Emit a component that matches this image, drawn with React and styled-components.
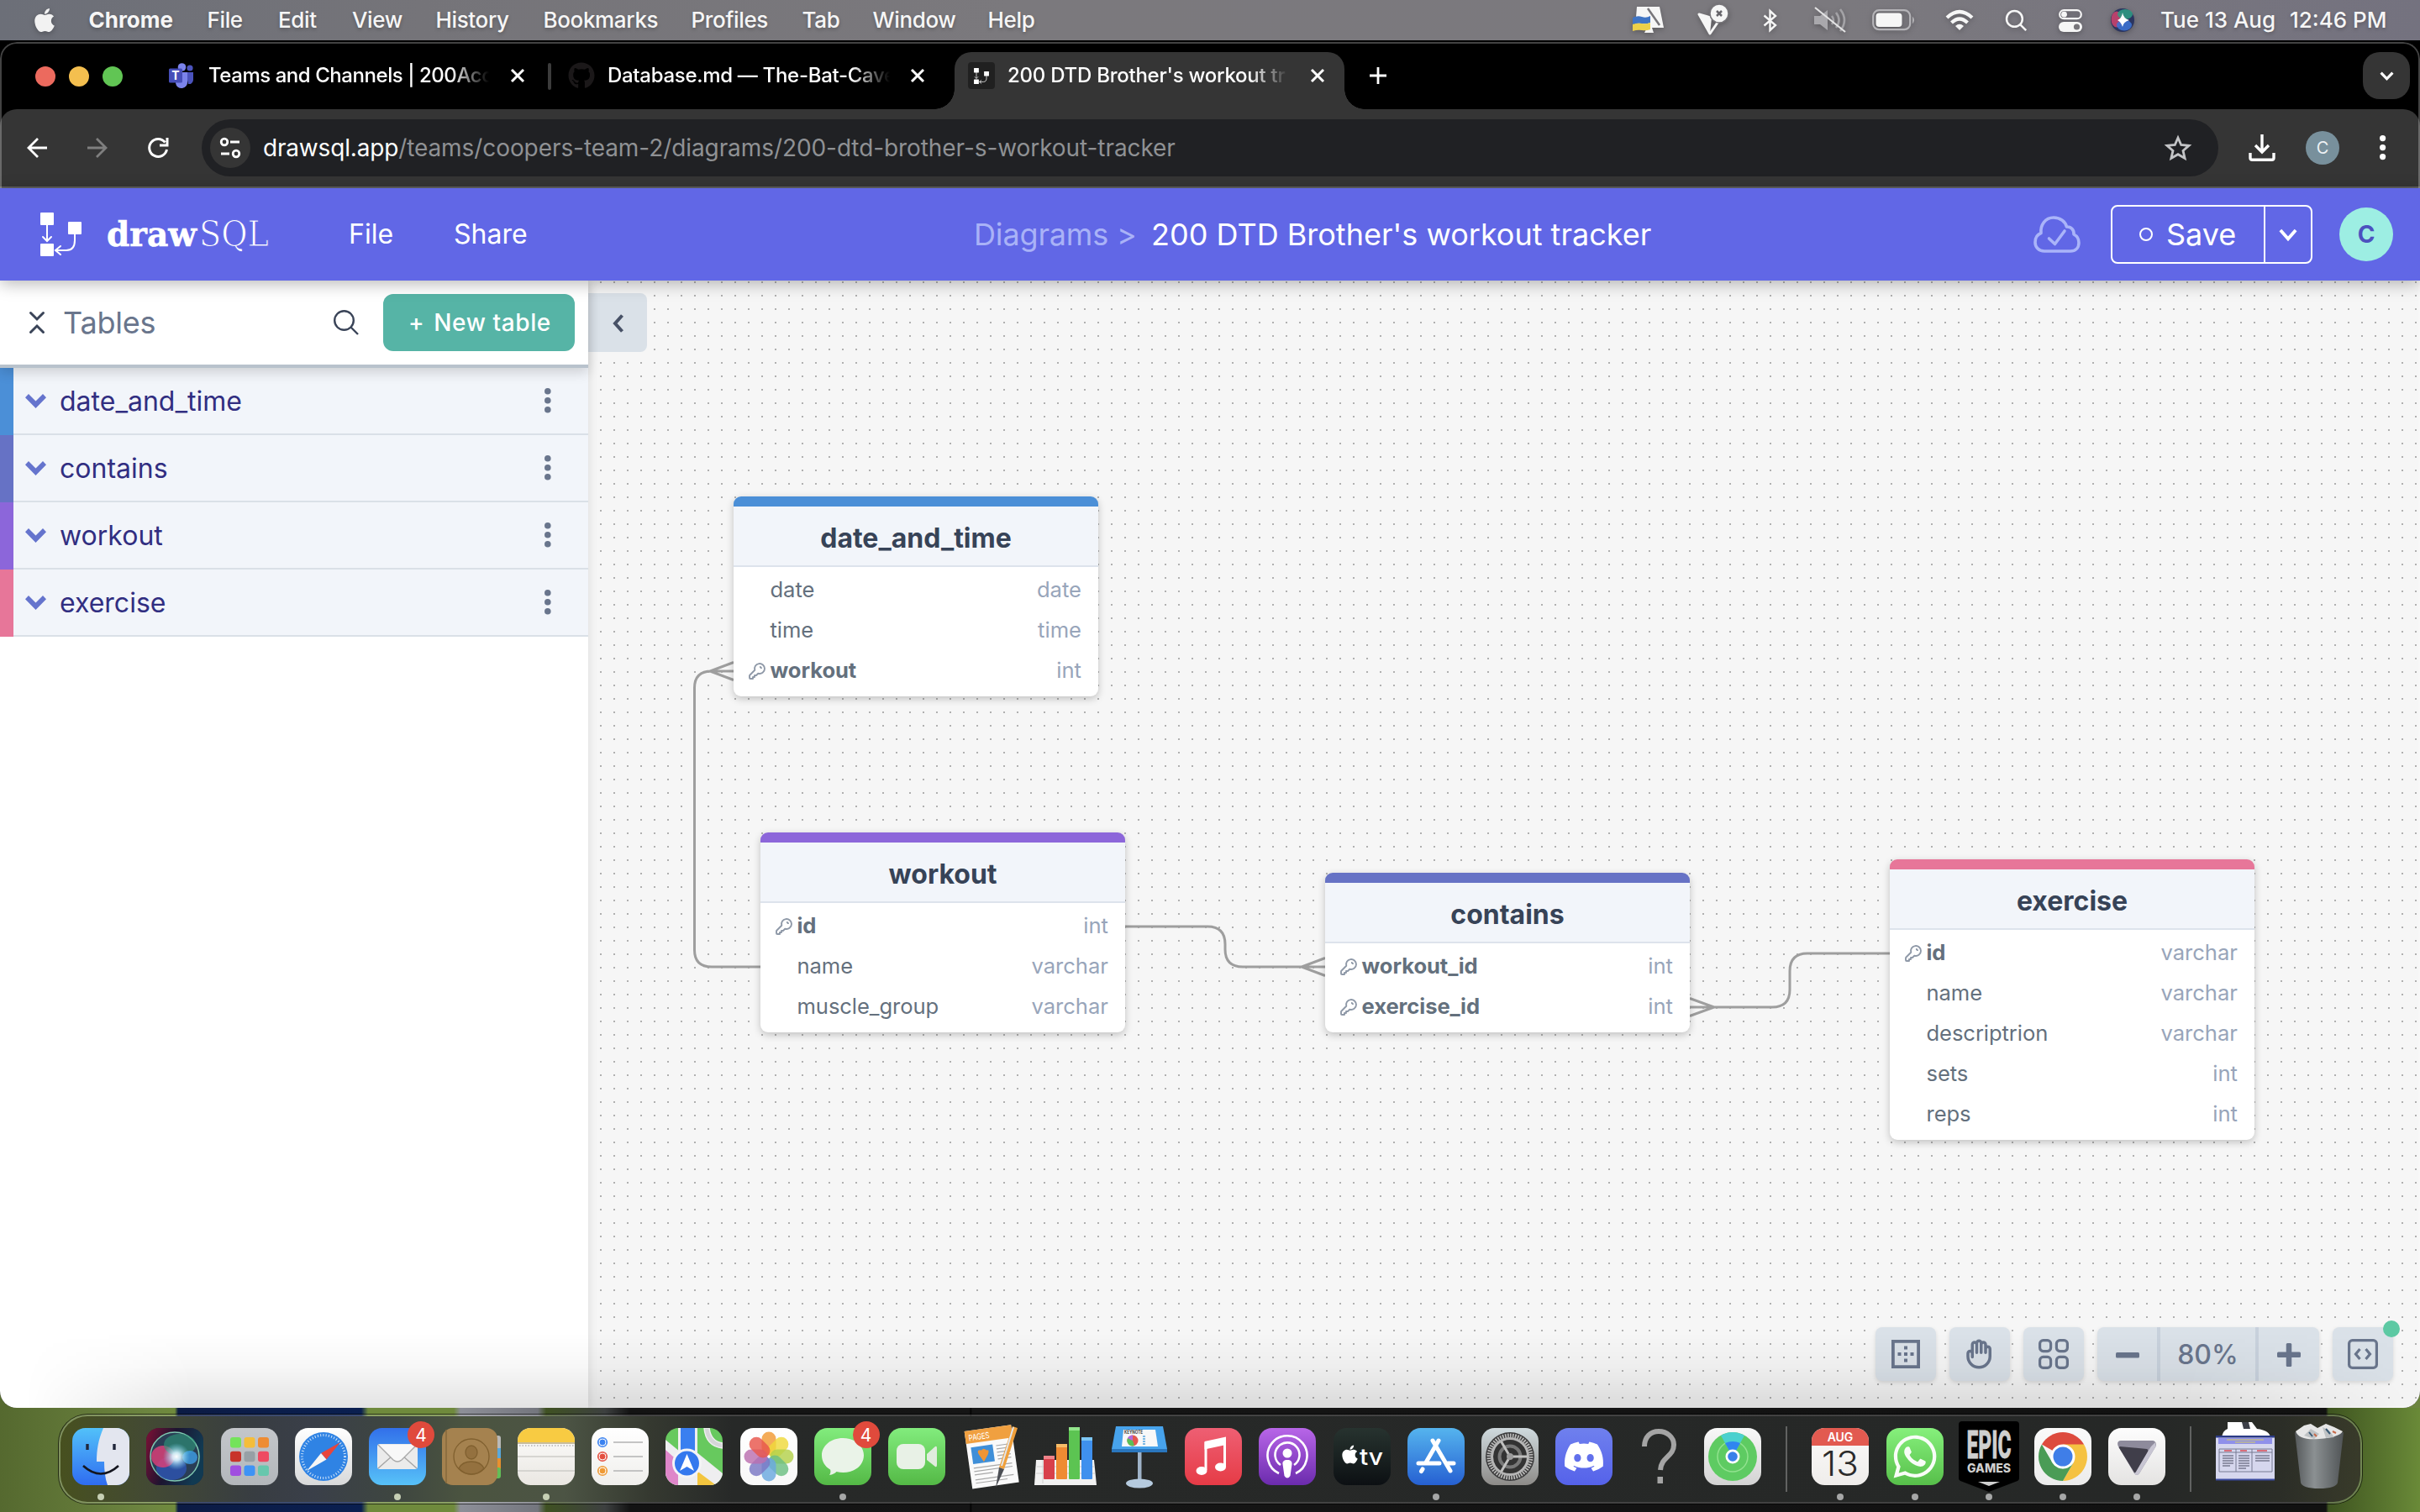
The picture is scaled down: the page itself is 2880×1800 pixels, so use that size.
import React from "react";
import styled, { createGlobalStyle, css } from "styled-components";
import { FaApple, FaGithub, FaDiscord, FaWhatsapp } from "react-icons/fa";

const sans = `Inter, "Liberation Sans", sans-serif`;

const Global = createGlobalStyle`
  * { box-sizing: border-box; }
  body { margin: 0; font-family: ${sans}; overflow: hidden; }
  svg { display: block; flex: none; overflow: visible; }
`;

/* ---------- Desktop ---------- */

const Desktop = styled.div`
  width: 2880px;
  height: 1800px;
  display: flex;
  flex-direction: column;
  overflow: hidden;
  background: #6d8540;
`;

const MenuBar = styled.header`
  height: 48px;
  flex: none;
  display: flex;
  align-items: center;
  justify-content: space-between;
  padding-left: 37px;
  padding-right: 38px;
  background: linear-gradient(90deg, #6c6f78 0, #757479 500px, #7b797d 1200px, #7b797e 2200px, #74727f 2880px);
  color: #f6f6f6;
  svg { filter: drop-shadow(0 2px 3px rgba(0, 0, 0, 0.25)); }
`;

const MenuGroup = styled.div`
  display: flex;
  align-items: center;
  height: 100%;
`;

const MenuItem = styled.span`
  width: ${(p) => p.$w}px;
  font-size: 26px;
  line-height: 46px;
  white-space: pre;
  font-weight: ${(p) => (p.$bold ? 700 : 500)};
  letter-spacing: ${(p) => p.$ls || 0}px;
  text-shadow: 0 2px 4px rgba(0, 0, 0, 0.25);
`;

const StatusIcon = styled.span`
  width: ${(p) => p.$w}px;
  display: flex;
`;

/* ---------- Browser window ---------- */

const BrowserWindow = styled.section`
  position: relative;
  margin-top: 2px;
  height: 1626px;
  flex: none;
  border-radius: 20px;
  overflow: hidden;
  display: flex;
  flex-direction: column;
  background: #000;
  &::after {
    content: "";
    position: absolute;
    inset: 0;
    border-radius: 20px;
    pointer-events: none;
    box-shadow: inset 0 0 0 2px rgba(255, 255, 255, 0.26);
  }
`;

const WindowBack = styled.div`
  flex: none;
  height: 1628px;
  display: flow-root;
  background: linear-gradient(180deg, #000 0 1500px, transparent 1500px),
    linear-gradient(90deg, #55692f, #6d8540);
`;

const TabStrip = styled.div`
  height: 80px;
  flex: none;
  display: flex;
  align-items: flex-end;
  padding: 0 12px 0 42px;
`;

const Lights = styled.div`
  display: flex;
  gap: 16px;
  height: 68px;
  padding-top: 17px;
  margin-right: 54px;
`;

const Light = styled.span`
  width: 24px;
  height: 24px;
  border-radius: 50%;
  background: ${(p) => p.$c};
`;

const Tab = styled.div`
  position: relative;
  height: 68px;
  display: flex;
  align-items: center;
  padding-bottom: 12px;
  color: #fff;
  ${(p) =>
    p.$active &&
    css`
      background: #353535;
      border-radius: 20px 20px 0 0;
      width: 464px;
      padding-left: 16px;
      margin-left: 36px;
      &::before,
      &::after {
        content: "";
        position: absolute;
        bottom: 0;
        width: 24px;
        height: 24px;
      }
      &::before {
        left: -24px;
        background: radial-gradient(circle at 0 0, transparent 23.5px, #353535 24px);
      }
      &::after {
        right: -24px;
        background: radial-gradient(circle at 100% 0, transparent 23.5px, #353535 24px);
      }
    `}
`;

const Favicon = styled.span`
  width: 32px;
  height: 32px;
  margin-right: ${(p) => p.$gap}px;
  display: flex;
  align-items: center;
  justify-content: center;
  border-radius: 4px;
  background: ${(p) => p.$bg || "transparent"};
`;

const TabTitle = styled.span`
  width: ${(p) => p.$w}px;
  white-space: nowrap;
  font-size: 24px;
  line-height: 32px;
  font-weight: 500;
  letter-spacing: ${(p) => p.$ls}px;
  margin-right: ${(p) => p.$after}px;
  mask-image: linear-gradient(90deg, #000 calc(100% - 46px), transparent);
`;

const TabSeparator = styled.span`
  width: 4px;
  height: 32px;
  border-radius: 2px;
  background: #3c3c3c;
  margin: 0 20px 23px 28px;
`;

const NewTab = styled.span`
  margin-left: 30px;
  height: 68px;
  padding-top: 18px;
`;

const TabSearch = styled.span`
  margin-left: auto;
  width: 56px;
  height: 56px;
  margin-bottom: 12px;
  border-radius: 20px;
  background: #353535;
  display: flex;
  align-items: center;
  justify-content: center;
`;

const Toolbar = styled.div`
  height: 94px;
  flex: none;
  background: #353535;
  border-bottom: 2px solid #5f5f5f;
  border-radius: 20px 20px 0 0;
  display: flex;
  align-items: center;
  padding: 0 36px 0 32px;
`;

const NavButtons = styled.div`
  display: flex;
  gap: 48px;
  width: 208px;
`;

const AddressBar = styled.div`
  width: 2400px;
  height: 68px;
  margin-right: 36px;
  border-radius: 34px;
  background: #202124;
  display: flex;
  align-items: center;
  padding: 0 32px 0 10px;
`;

const SiteInfo = styled.span`
  width: 48px;
  height: 48px;
  border-radius: 50%;
  background: #353535;
  display: flex;
  align-items: center;
  justify-content: center;
  margin-right: 15px;
`;

const Url = styled.span`
  flex: 1;
  font-size: 28px;
  color: #8f9194;
  letter-spacing: -0.08px;
  b {
    font-weight: 400;
    color: #fff;
    letter-spacing: -0.18px;
  }
`;

const ProfileDot = styled.span`
  width: 40px;
  height: 40px;
  border-radius: 50%;
  background: #78909c;
  color: #eef2f4;
  font-size: 20px;
  display: flex;
  align-items: center;
  justify-content: center;
  margin: 0 48px 0 36px;
`;

/* ---------- Application header ---------- */

const AppHeader = styled.header`
  position: relative;
  z-index: 2;
  height: 110px;
  flex: none;
  background: #6167e6;
  color: #fff;
  display: flex;
  align-items: center;
  padding: 0 32px 0 48px;
  box-shadow: 0 4px 18px rgba(0, 0, 0, 0.28);
`;

const Brand = styled.div`
  display: flex;
  align-items: center;
  gap: 30px;
  width: 367px;
`;

const Wordmark = styled.svg`
  font-family: "DejaVu Serif", serif;
  fill: #fff;
`;

const HeaderLink = styled.span`
  width: ${(p) => p.$w}px;
  font-size: 32px;
  line-height: 40px;
`;

const Breadcrumb = styled.div`
  display: flex;
  flex: 1;
  font-size: 36px;
  white-space: nowrap;
`;

const Crumb = styled.span`
  width: ${(p) => p.$w}px;
  color: ${(p) => (p.$muted ? "#a9b2f7" : "#fff")};
  letter-spacing: ${(p) => p.$ls}px;
`;

const SaveGroup = styled.div`
  display: flex;
  width: 240px;
  height: 70px;
  border: 2px solid #fff;
  border-radius: 8px;
  margin: 0 32px 0 36px;
`;

const SaveButton = styled.span`
  width: 182px;
  border-right: 2px solid #fff;
  display: flex;
  align-items: center;
  padding-left: 32px;
  font-size: 36px;
`;

const Ring = styled.span`
  width: 16px;
  height: 16px;
  border: 2.5px solid #fff;
  border-radius: 50%;
  margin-right: 16px;
`;

const SaveMenu = styled.span`
  flex: 1;
  display: flex;
  align-items: center;
  justify-content: center;
`;

const Avatar = styled.span`
  width: 64px;
  height: 64px;
  border-radius: 50%;
  background: #9deee3;
  color: #4c51bf;
  font-size: 28px;
  font-weight: 700;
  display: flex;
  align-items: center;
  justify-content: center;
`;

/* ---------- Workspace ---------- */

const Workspace = styled.main`
  position: relative;
  flex: 1;
  display: flex;
  min-height: 0;
  &::after {
    content: "";
    position: absolute;
    z-index: 2;
    left: 0;
    right: 0;
    bottom: 0;
    height: 90px;
    pointer-events: none;
    background: linear-gradient(180deg, transparent, rgba(0, 0, 0, 0.03) 45%, rgba(0, 0, 0, 0.11));
    mask-image: linear-gradient(90deg, transparent 30px, #000 230px, #000 2600px, rgba(0, 0, 0, 0.1) 2860px);
  }
`;

const Sidebar = styled.aside`
  width: 700px;
  flex: none;
  background: #fff;
  box-shadow: 0 0 12px rgba(0, 0, 0, 0.12);
  z-index: 1;
`;

const SidebarHead = styled.div`
  position: relative;
  height: 104px;
  border-bottom: 4px solid #b8c2cc;
  box-shadow: 0 5px 14px rgba(0, 0, 0, 0.16);
  display: flex;
  align-items: center;
  padding: 0 16px 0 35px;
`;

const SidebarTitle = styled.h2`
  margin: 0 0 0 22px;
  width: 322px;
  font-size: 36px;
  font-weight: 400;
  color: #69758c;
  letter-spacing: -0.2px;
`;

const NewTable = styled.span`
  width: 228px;
  height: 68px;
  margin-left: 29px;
  border-radius: 12px;
  background: #56b4a6;
  color: #fff;
  font-size: 28px;
  font-weight: 500;
  letter-spacing: 0.6px;
  display: flex;
  align-items: center;
  padding-left: 30px;
  gap: 11px;
  white-space: nowrap;
`;

const TableRow = styled.div`
  height: 80px;
  display: flex;
  align-items: stretch;
  background: #f2f5fa;
`;

const Stripe = styled.span`
  width: 16px;
  background: ${(p) => p.$c};
`;

const RowBody = styled.div`
  flex: 1;
  display: flex;
  align-items: center;
  border-bottom: 2px solid #dae0e7;
  padding: 0 44px 0 14px;
`;

const RowName = styled.span`
  flex: 1;
  margin-left: 16px;
  font-size: 32px;
  color: #312e81;
`;

const Canvas = styled.div`
  position: relative;
  flex: 1;
  overflow: hidden;
  background-color: #f6f6f6;
  background-image: conic-gradient(from 270deg at 2px 2px, #b0b0b0 90deg, transparent 0);
  background-size: 16px 16px;
  background-position: 14px 1px;
`;

const CollapseTab = styled.span`
  position: absolute;
  left: 0;
  top: 15px;
  width: 70px;
  height: 70px;
  border-radius: 0 8px 8px 0;
  background: #dae1e8;
  display: flex;
  align-items: center;
  justify-content: center;
  padding-top: 2px;
`;

const Links = styled.svg`
  position: absolute;
  left: 0;
  top: 0;
  fill: none;
  stroke: #9e9e9e;
  stroke-width: 3;
`;

const Entity = styled.article`
  position: absolute;
  left: ${(p) => p.$x}px;
  top: ${(p) => p.$y}px;
  width: 434px;
  border-radius: 9px;
  background: #fff;
  border-top: 12px solid ${(p) => p.$c};
  box-shadow: 0 3px 10px rgba(0, 0, 0, 0.22);
  padding-bottom: 6px;
`;

const EntityTitle = styled.h3`
  margin: 0 0 4px;
  height: 72px;
  border-bottom: 2px solid #dde3ec;
  background: #f2f5fa;
  text-align: center;
  font-size: 32px;
  line-height: 76px;
  font-weight: 700;
  color: #374357;
`;

const Field = styled.div`
  height: 48px;
  display: flex;
  align-items: center;
  padding: 0 20px 3px 18px;
  font-size: 25.6px;
  color: #64707d;
`;

const FieldName = styled.span`
  flex: 1;
  font-weight: ${(p) => (p.$key ? 700 : 400)};
  letter-spacing: -0.08px;
`;

const FieldType = styled.span`
  color: #98a5ba;
`;

const KeySlot = styled.span`
  width: 25.5px;
  padding-top: 3px;
`;

const Controls = styled.div`
  position: absolute;
  right: 32px;
  bottom: 32px;
  display: flex;
  gap: 16px;
`;

const Tool = styled.span`
  position: relative;
  width: 72px;
  height: 64px;
  border-radius: 8px;
  background: #dae1e8;
  box-shadow: 0 2px 5px rgba(0, 0, 0, 0.12);
  display: flex;
  align-items: center;
  justify-content: center;
`;

const ZoomGroup = styled.div`
  width: 264px;
  height: 64px;
  border-radius: 8px;
  background: #dae1e8;
  box-shadow: 0 2px 5px rgba(0, 0, 0, 0.12);
  display: grid;
  grid-template-columns: 75px 117px 72px;
`;

const ZoomCell = styled.span`
  display: flex;
  align-items: center;
  justify-content: center;
  border-right: ${(p) => (p.$line ? "4px solid #c8d1dc" : "0")};
  font-size: 32px;
  font-weight: 500;
  color: #69758c;
`;

const Notice = styled.i`
  position: absolute;
  right: -8px;
  top: -8px;
  width: 20px;
  height: 20px;
  border-radius: 50%;
  background: #5cc9a3;
`;

/* ---------- Dock ---------- */

const DockArea = styled.footer`
  flex: 1;
  display: flex;
  justify-content: center;
  padding: 8px 69px 10px 70px;
  background: linear-gradient(
    90deg,
    #55692f 0,
    #6d8540 180px,
    #6f8a3c 208px,
    #0c1b44 212px,
    #0a1f50 430px,
    #6f8a3c 438px,
    #6f8a3c 540px,
    #8d8f98 548px,
    #74767e 640px,
    #3f5122 650px,
    #3d4040 720px,
    #131313 750px,
    #151515 1154px,
    #000 1155px,
    #151515 1157px,
    #111 2768px,
    #3e5420 2771px,
    #6a8a38 2880px
  );
`;

const Dock = styled.div`
  flex: 1;
  border-radius: 34px;
  border: 2px solid rgba(255, 255, 255, 0.2);
  background: linear-gradient(
    90deg,
    #47501f 0,
    #434a33 100px,
    #383d42 230px,
    #3a3f49 300px,
    #3e4640 400px,
    #4b5440 480px,
    #4c5444 600px,
    #353930 700px,
    #272928 800px,
    #262827 2500px,
    #2b2d27 2640px,
    #393b2a 2740px
  );
  background-clip: padding-box;
  box-shadow: 0 0 0 1px rgba(0, 0, 0, 0.6);
  display: flex;
  padding-left: 4px;
  padding-top: 14px;
`;

const DockSlot = styled.div`
  position: relative;
  width: 88.27px;
  display: flex;
  flex-direction: column;
  align-items: center;
  &::after {
    content: "";
    display: ${(p) => (p.$running ? "block" : "none")};
    width: 8px;
    height: 8px;
    border-radius: 50%;
    margin-top: 10px;
    background: ${(p) => (p.$warm ? "#c6cfb4" : "#a6a7a7")};
  }
`;

const DockDivider = styled.span`
  width: 2px;
  height: 78px;
  margin: -2px 19px 0;
  background: #616261;
`;

const Badge = styled.span`
  position: absolute;
  left: 56px;
  top: -8px;
  width: 32px;
  height: 32px;
  border-radius: 50%;
  background: #e04a3c;
  color: #fff;
  font-size: 21px;
  display: flex;
  align-items: center;
  justify-content: center;
`;

/* ---------- Small drawings ---------- */

const Chevron = ({ w, h, s, c }) => (
  <svg width={w} height={h} viewBox={`0 0 ${w} ${h}`} fill="none" stroke={c} strokeWidth={s}>
    <path d={`M${s / 2} ${s / 2}L${w / 2} ${h - s * 0.7}L${w - s / 2} ${s / 2}`} />
  </svg>
);

const RowChevron = () => (
  <svg width="25" height="17" viewBox="0 0 25 17" fill="#6574cd">
    <path d="M4 0L12.500 8.500L21 0L25 4.300L12.500 17L0 4.300z" />
  </svg>
);

const Cross = () => (
  <svg width="16" height="16" viewBox="0 0 16 16" stroke="#fff" strokeWidth="3">
    <path d="M1 1L15 15M15 1L1 15" />
  </svg>
);

const VDots = ({ r, gap, c }) => (
  <svg width={r * 2} height={gap * 2 + r * 2} fill={c}>
    {[0, 1, 2].map((i) => (
      <circle key={i} cx={r} cy={r + i * gap} r={r} />
    ))}
  </svg>
);

const Magnifier = ({ size, c, s }) => (
  <svg width={size} height={size} viewBox="0 0 30 30" fill="none" stroke={c} strokeWidth={s}>
    <circle cx="12.5" cy="12.5" r="11.3" />
    <path d="M20.5 20.5L29 29" />
  </svg>
);

const Mark = ({ w, h }) => (
  <svg width={w} height={h} viewBox="0 0 49 52" fill="#fff">
    <rect x="0" y="0" width="16" height="15" rx="1" />
    <rect x="33" y="11" width="16" height="15" rx="1" />
    <rect x="0" y="37" width="16" height="15" rx="1" />
    <g fill="none" stroke="#fff" strokeWidth="2" strokeLinecap="round">
      <path d="M8 15V33M3 29l5 5 5-5" />
      <path d="M41 26V33Q41 45 31 45H19M24 40l-6 5 6 5" />
    </g>
  </svg>
);

const KeyIcon = () => (
  <svg width="21" height="21" viewBox="2 2 21 21" fill="none" stroke="#8f99a8" strokeWidth="1.900" strokeLinejoin="round">
    <path d="M15 7a2 2 0 012 2m4 0a6 6 0 01-7.743 5.743L11 17H9v2H7v2H4a1 1 0 01-1-1v-2.586a1 1 0 01.293-.707l5.964-5.964A6 6 0 1121 9z" />
  </svg>
);

const TeamsIcon = () => (
  <svg width="32" height="30" viewBox="0 0 32 30">
    <circle cx="26" cy="6" r="3.6" fill="#4b53bc" />
    <circle cx="16.5" cy="5" r="4.8" fill="#7b83eb" />
    <path d="M21 11h9v9a5 5 0 0 1-6 5z" fill="#4b53bc" />
    <path d="M9 11h14v11a7 7 0 0 1-14 2z" fill="#7b83eb" />
    <rect x="1" y="6.500" width="16" height="17" rx="1.500" fill="#464eb8" />
    <text x="9" y="20" fontSize="14" fontWeight="700" textAnchor="middle" fill="#fff" fontFamily="Inter, sans-serif">T</text>
  </svg>
);

const HandIcon = () => (
  <svg width="42" height="42" viewBox="0 0 24 24" fill="none" stroke="#69758c" strokeWidth="2" strokeLinecap="round" strokeLinejoin="round">
    <path d="M7 11.500V14m0-2.500v-6a1.500 1.500 0 113 0m-3 6a1.500 1.500 0 00-3 0v2a7.500 7.500 0 0015 0v-5a1.500 1.500 0 00-3 0m-6-3V11m0-5.500v-1a1.500 1.500 0 013 0v1m0 0V11m0-5.500a1.500 1.500 0 013 0v3m0 0V11" />
  </svg>
);

/* ---------- Dock icons, each on a 68-unit tile ---------- */

const Tile = ({ id, from, to, children }) => (
  <svg width="68" height="68" viewBox="0 0 68 68">
    <defs>
      <linearGradient id={id} x1="0" y1="0" x2="0" y2="1">
        <stop offset="0" stopColor={from} />
        <stop offset="1" stopColor={to} />
      </linearGradient>
      <clipPath id={id + "c"}>
        <rect width="68" height="68" rx="15.500" />
      </clipPath>
    </defs>
    <g clipPath={`url(#${id}c)`}>
      <rect width="68" height="68" fill={`url(#${id})`} />
      {children}
    </g>
  </svg>
);

const Finder = () => (
  <Tile id="finder" from="#52c1fa" to="#2f6cf0">
    <path d="M37 0C31 14 29 26 29 40h9c0 10 1 20 4 28H68V0z" fill="#e3e6ef" />
    <path d="M18 19v7M50 19v7" stroke="#20263a" strokeWidth="3.400" />
    <path d="M13 45Q34 64 55 45" fill="none" stroke="#14161f" strokeWidth="2.600" />
  </Tile>
);

const Siri = () => (
  <Tile id="siri" from="#3a1533" to="#18254a">
    <defs>
      <linearGradient id="siribg" x1="0" y1="0" x2="1" y2="0.300">
        <stop offset="0" stopColor="#7d1035" />
        <stop offset=".5" stopColor="#1c1430" />
        <stop offset="1" stopColor="#113a52" />
      </linearGradient>
      <radialGradient id="siriglow">
        <stop offset="0" stopColor="#fff" />
        <stop offset=".3" stopColor="#d9f4ff" stopOpacity=".9" />
        <stop offset="1" stopColor="#6fd0f0" stopOpacity="0" />
      </radialGradient>
    </defs>
    <rect width="68" height="68" fill="url(#siribg)" />
    <circle cx="34" cy="34" r="29" fill="#2a3e55" stroke="#7fc8b0" strokeWidth="1.500" />
    <ellipse cx="30" cy="48" rx="18" ry="14" fill="#2e56b8" opacity=".75" />
    <ellipse cx="20" cy="34" rx="14" ry="13" fill="#d83f78" opacity=".85" />
    <ellipse cx="40" cy="20" rx="19" ry="13" fill="#2f9a7a" opacity=".6" />
    <ellipse cx="52" cy="35" rx="9" ry="8" fill="#3f9fe8" opacity=".8" />
    <circle cx="36" cy="34" r="16" fill="url(#siriglow)" />
  </Tile>
);

const Launchpad = () => {
  const c = ["#74e35b", "#f4bd3b", "#ee8c33", "#c8332a", "#97a0a6", "#ee4b62", "#a04fe0", "#3f93f5", "#67c7ad"];
  return (
    <Tile id="lp" from="#c3c6ca" to="#b3b7bb">
      {c.map((f, i) => (
        <rect key={i} x={11 + (i % 3) * 16.5} y={11 + Math.floor(i / 3) * 16.8} width="13" height="12.500" rx="3" fill={f} />
      ))}
    </Tile>
  );
};

const Safari = () => (
  <Tile id="saf" from="#fff" to="#d8d9da">
    <circle cx="34" cy="34" r="29" fill="#2f83e4" />
    <circle cx="34" cy="34" r="25.500" fill="none" stroke="#cfe4fa" strokeWidth="3" strokeDasharray="1 2.300" />
    <path d="M54 17L37.500 37.500 31 30z" fill="#e8453c" />
    <path d="M14 51L37.500 37.500 31 30z" fill="#f5f5f5" />
  </Tile>
);

const Mail = () => (
  <Tile id="mail" from="#3270ea" to="#57c2f8">
    <rect x="10" y="19" width="48" height="30" rx="3" fill="#ebebeb" />
    <path d="M11 48L28 33M57 48L40 33" stroke="#a5a5a5" strokeWidth="1.400" />
    <path d="M11 20L29 38Q34 42 39 38L57 20" fill="#f8f8f8" stroke="#a9a9a9" strokeWidth="1.400" />
  </Tile>
);

const Contacts = () => (
  <svg width="72" height="68" viewBox="-1 0 72 68">
    <rect x="58" y="9" width="12" height="18" rx="3" fill="#b9b9b7" />
    <rect x="58" y="24" width="12" height="14" fill="#5aa9dc" />
    <rect x="58" y="36" width="12" height="14" fill="#e8902e" />
    <rect x="58" y="47" width="12" height="13" rx="3" fill="#62bf57" />
    <rect x="0" y="0" width="66" height="68" rx="13" fill="#a5824f" />
    <path d="M5 2V66" stroke="#86683b" strokeWidth="1.500" />
    <g fill="#94713f" stroke="#80602f" strokeWidth="1.300">
      <circle cx="35" cy="34" r="21" fill="none" />
      <ellipse cx="35" cy="29" rx="7" ry="8" />
      <path d="M20 48Q24 40 35 40T50 48Q44 55 35 55T20 48z" />
    </g>
  </svg>
);

const Notes = () => (
  <Tile id="notes" from="#fdfdfc" to="#eae7e2">
    <rect width="68" height="17" fill="#f8cb42" />
    <path d="M0 18H68" stroke="#b9a97c" strokeWidth="1.500" />
    <path d="M2 21H68" stroke="#b3b3b3" strokeWidth="1.500" strokeDasharray="1.500 2" />
    <path d="M0 34H68M0 51H68" stroke="#cdcbc8" strokeWidth="1.500" />
  </Tile>
);

const Reminders = () => (
  <Tile id="rem" from="#fff" to="#f0efec">
    {["#3b82f0", "#e44f40", "#ef9a35"].map((c, i) => (
      <g key={c}>
        <circle cx="13" cy={17 + i * 17} r="5" fill={c} />
        <circle cx="13" cy={17 + i * 17} r="4" fill="none" stroke="#fff" strokeWidth="1" />
        <circle cx="13" cy={17 + i * 17} r="5.500" fill="none" stroke={c} strokeWidth="1.200" />
        <path d={`M26 ${17 + i * 17}H61`} stroke="#c4c4c4" strokeWidth="1.800" />
      </g>
    ))}
  </Tile>
);

const Maps = () => (
  <Tile id="maps" from="#67c95e" to="#67c95e">
    <path d="M0 14L68 70H0z" fill="#eeeef0" />
    <path d="M0 26L18 42V68H0z" fill="#de86c9" />
    <path d="M36 28L68 54V68L60 68 36 50z" fill="#eeeef0" />
    <path d="M36 50L60 68H36z" fill="#f3c53f" />
    <rect x="15" width="23" height="68" fill="#eeeef0" />
    <rect x="18" width="17" height="34" fill="#3a7ff0" />
    <path d="M46 0Q48 22 68 24V18Q54 16 52 0z" fill="#d5d6d8" stroke="#eee" strokeWidth="1.500" />
    <circle cx="25.500" cy="42" r="17.500" fill="#f4f4f6" />
    <circle cx="25.500" cy="42" r="14.500" fill="#3478ee" />
    <path d="M25.500 31L34 51 25.500 46 17 51z" fill="#fff" />
  </Tile>
);

const Photos = () => {
  const c = ["#f29a34", "#efd93c", "#b3d14b", "#6cbf83", "#6aa8df", "#7a77c4", "#bb6fb0", "#e8564c"];
  return (
    <Tile id="pho" from="#fff" to="#f8f8f8">
      {c.map((f, i) => (
        <rect key={f} x="25.500" y="4.500" width="17" height="28" rx="8.500" fill={f} opacity=".82" transform={`rotate(${i * 45} 34 34)`} />
      ))}
      <circle cx="34" cy="34" r="1.500" fill="#fff" />
    </Tile>
  );
};

const Messages = () => (
  <Tile id="msg" from="#82ec7d" to="#54b946">
    <path d="M34 12C20 12 9 21 9 32.500 9 40 13 46 19 49.500 20 52 19 54.500 18 56 22 55.500 24.500 54 26.500 52 45 56 59 46 59 32.500 59 21 48 12 34 12z" fill="#eaf3e8" />
  </Tile>
);

const FaceTime = () => (
  <Tile id="ft" from="#82ec7d" to="#54b946">
    <rect x="10" y="19" width="34" height="30" rx="8" fill="#e8f1e6" />
    <path d="M46 31L56 22Q58 21 58 24V44Q58 47 56 46L46 38z" fill="#e0ecde" />
  </Tile>
);

const Pages = () => (
  <svg width="68" height="78" viewBox="0 0 68 78">
    <g transform="rotate(-8 34 38)">
      <rect x="7" y="5" width="56" height="69" fill="#fafafa" />
      <rect x="7" y="5" width="56" height="15" fill="#f0a040" />
      <text x="11" y="17" fontSize="10" fill="#fff" fontFamily="Inter, sans-serif" textLength="25" lengthAdjust="spacingAndGlyphs">PAGES</text>
      <rect x="12" y="25" width="26" height="20" fill="#3f8fd8" />
      <path d="M25 44L20 34Q18 28 24 30 27 27 30 31 34 30 31 36z" fill="#f09535" />
      <path d="M42 27H58M42 31H58M42 35H58M42 39H58M42 43H58M12 50H58M12 54H58M12 58H34M12 64H58M12 68H50" stroke="#a8a8a8" strokeWidth="1.200" />
    </g>
    <path d="M60 3L66 5 50 54 44 52z" fill="#f0a03c" />
    <path d="M50 54L44 52 40 76z" fill="#4c4f55" />
    <path d="M61 4L47 50" stroke="#dfe6ee" strokeWidth="2" />
  </svg>
);

const Numbers = () => (
  <svg width="74" height="68" viewBox="0 0 74 68">
    <path d="M2 38H71L74 68H0z" fill="#f1f1f1" />
    <path d="M10 38V66M3 46H72M2 54H72" stroke="#cfcfcf" />
    <rect x="11" y="33" width="13" height="28" rx="1" fill="#d8404b" />
    <rect x="26" y="19" width="13" height="42" rx="1" fill="#ef8b33" />
    <rect x="41" y="-1" width="13" height="62" rx="1" fill="#5cc452" />
    <rect x="56" y="11" width="13" height="50" rx="1" fill="#3f90ee" />
    <path d="M11 33h13v4H11z" fill="#ee8289" />
    <path d="M26 19h13v4H26z" fill="#f7bd68" />
    <path d="M41 -1h13v4H41z" fill="#93e68c" />
    <path d="M56 11h13v4H56z" fill="#7cc6f5" />
  </svg>
);

const Keynote = () => (
  <svg width="68" height="78" viewBox="0 0 68 78">
    <rect x="32" y="30" width="4.500" height="42" fill="#9fb3c8" />
    <ellipse cx="34" cy="71" rx="16" ry="5.500" fill="#b6cbdf" />
    <path d="M6 3H62L67 30H1z" fill="#47a3ec" />
    <path d="M1 30H67V34H1z" fill="#2a76bd" />
    <path d="M15 7H53L56 27H13z" fill="#f8f8f8" />
    <text x="16" y="12" fontSize="5.500" fontWeight="700" fill="#444" fontFamily="Inter, sans-serif" textLength="22" lengthAdjust="spacingAndGlyphs">KEYNOTE</text>
    <circle cx="26" cy="20" r="6.500" fill="#e3574f" />
    <path d="M26 20L20 17A6.500 6.500 0 0 0 28 26z" fill="#5bbf58" />
    <path d="M26 20V13.500A6.500 6.500 0 0 0 20 17z" fill="#b06adf" />
    <path d="M38 15h3M38 18h3M38 21h3M38 24h3" stroke="#56a5de" strokeWidth="1.500" />
  </svg>
);

const Music = () => (
  <Tile id="mus" from="#ee5f73" to="#e63b46">
    <path d="M47.500 12V46" fill="none" stroke="#fff" strokeWidth="3" />
    <path d="M23.500 16L49 10.500V20L23.500 25.500z" fill="#fff" />
    <path d="M25 17V50" stroke="#fff" strokeWidth="3" />
    <ellipse cx="20" cy="51" rx="6.500" ry="5" fill="#fff" />
    <ellipse cx="42.500" cy="46.500" rx="6.500" ry="5" fill="#fff" />
  </Tile>
);

const Podcasts = () => (
  <Tile id="pod" from="#b866e8" to="#6b2bad">
    <g fill="none" stroke="#fff" strokeWidth="2.600">
      <path d="M24 54A23.500 23.500 0 1 1 44 54" />
      <path d="M26 44A14.500 14.500 0 1 1 42 44" />
    </g>
    <circle cx="34" cy="30" r="5.500" fill="#fff" />
    <path d="M34 38C38 38 40 40 39.500 43L37.500 57Q34 62 30.500 57L28.500 43C28 40 30 38 34 38z" fill="#fff" />
  </Tile>
);

const AppleTv = () => (
  <Tile id="tv" from="#27332f" to="#0c1013">
    <FaApple x="7" y="19" size="25" color="#fff" />
    <text x="31" y="44" fontSize="27" fontWeight="500" fill="#fff" fontFamily="Inter, sans-serif" textLength="28" lengthAdjust="spacingAndGlyphs">tv</text>
  </Tile>
);

const AppStore = () => (
  <Tile id="as" from="#55b4ee" to="#2660d2">
    <g stroke="#fff" strokeWidth="5" strokeLinecap="round">
      <path d="M37 15L22 41M30 15L51 51M13 42H38M48 42H55M18 49L16.500 51.500" />
    </g>
  </Tile>
);

const Settings = () => (
  <Tile id="set" from="#cfdade" to="#8d8b88">
    <circle cx="34" cy="34" r="29" fill="#3a3a3b" />
    <circle cx="34" cy="34" r="25" fill="none" stroke="#b9b9b8" strokeWidth="5" strokeDasharray="1.700 1.300" />
    <circle cx="34" cy="34" r="21.500" fill="#333" stroke="#b5b5b5" strokeWidth="3" />
    <circle cx="34" cy="34" r="12.500" fill="none" stroke="#777" strokeWidth="4" />
    <path d="M34 34H55M34 34L23.500 16M34 34L23.500 52" stroke="#c0c0bf" strokeWidth="3" />
    <circle cx="34" cy="34" r="4" fill="#9c9c9c" />
  </Tile>
);

const Discord = () => (
  <Tile id="dis" from="#6f80ee" to="#5562ea">
    <FaDiscord x="9" y="9" size="50" color="#fff" />
  </Tile>
);

const Question = () => (
  <svg width="44" height="68" viewBox="0 0 44 68">
    <path d="M5 22C5 11 12 4 22 4S40 11 40 20C40 34 25 34 24 50" fill="none" stroke="#a4a4a4" strokeWidth="6" />
    <rect x="20.500" y="58" width="6.500" height="8" fill="#a4a4a4" />
  </svg>
);

const FindMy = () => (
  <Tile id="fm" from="#f8f8f8" to="#d3d3d3">
    <circle cx="34" cy="34" r="29" fill="#5ecb62" />
    <circle cx="34" cy="34" r="18" fill="none" stroke="#92e28f" strokeWidth="1.500" />
    <path d="M34 34L20 9Q34 1 48 9z" fill="#4bd0cf" />
    <path d="M34 34L25 18Q34 14 43 18z" fill="#2f86f0" />
    <circle cx="34" cy="34" r="8.500" fill="#fff" />
    <circle cx="34" cy="34" r="5.800" fill="#3a80ea" />
  </Tile>
);

const Calendar = () => (
  <Tile id="cal" from="#fbfaf9" to="#efedeb">
    <rect width="68" height="21" fill="#e25a50" />
    <text x="34" y="16" fontSize="14" fontWeight="600" fill="#fff" textAnchor="middle" fontFamily="Inter, sans-serif">AUG</text>
    <text x="34" y="57" fontSize="41" fontWeight="300" fill="#2b2b2b" textAnchor="middle" fontFamily="Inter, sans-serif" textLength="44" lengthAdjust="spacingAndGlyphs">13</text>
  </Tile>
);

const WhatsApp = () => (
  <Tile id="wa" from="#86f07c" to="#57bf4a">
    <FaWhatsapp x="5" y="5" size="58" color="#f8fdf7" />
  </Tile>
);

const Epic = () => (
  <svg width="72" height="84" viewBox="0 0 72 84">
    <path d="M4 0H68Q72 0 72 4V68Q72 70 70 71L36 84 2 71Q0 70 0 68V4Q0 0 4 0z" fill="#000" />
    <text x="9.500" y="43.500" fontSize="46" fontWeight="800" fill="#cfcfcf" stroke="#cfcfcf" strokeWidth="0.800" fontFamily="Roboto, sans-serif" textLength="53" lengthAdjust="spacingAndGlyphs">EPIC</text>
    <text x="10" y="61" fontSize="14" fontWeight="800" fill="#cfcfcf" fontFamily="Inter, sans-serif" textLength="52" lengthAdjust="spacingAndGlyphs">GAMES</text>
    <path d="M23 72H49L36 77z" fill="#cfcfcf" />
  </svg>
);

const ChromeIcon = () => (
  <Tile id="chr" from="#fafafa" to="#ececec">
    <g transform="translate(34 34)">
      <path d="M0 0L-25.100 -14.500A29 29 0 0 1 25.100 -14.500z" fill="#dd4b3e" />
      <path d="M0 -14.500H25.100A29 29 0 0 1 0 29L12.500 7.250z" fill="#f5c242" />
      <path d="M-25.100 -14.500L-12.500 7.250 0 14.500 12.500 7.250 0 29A29 29 0 0 1 -25.100 -14.500z" fill="#4a9c56" />
      <circle r="14.500" fill="#fff" />
      <circle r="11.500" fill="#3f7ee8" />
    </g>
  </Tile>
);

const Delta = () => (
  <Tile id="del" from="#fdfdfd" to="#e4e3e2">
    <path d="M15 15H53Q58 16 56.500 22L37 54Q34 58 31 54L11.500 21Q10 15 15 15z" fill="#8e8b9c" />
    <path d="M56.500 22L37 54Q34 58 31 54L32 52 47 28Q50 22 56 17z" fill="#c7c5d2" />
    <path d="M14 22L46 25Q48 26 47 28L33 52Q32 54 31 53L12.500 23z" fill="#403e4a" />
  </Tile>
);

const DocStack = () => (
  <svg width="72" height="72" viewBox="0 0 72 72">
    <path d="M15 -5H44L50 3Q66 5 66 14H8Q9 5 15 3z" fill="#fff" />
    <path d="M32 -5H40L42 3H34z" fill="#3d4048" />
    <rect x="1" y="11" width="70" height="53" fill="#d6d7ee" />
    <rect x="1" y="11" width="70" height="2.500" fill="#2b3b86" />
    <rect x="4" y="14" width="64" height="7" fill="#8f90ea" />
    <path d="M14 16H58M24 19H48" stroke="#d9cf5a" strokeWidth="1.200" />
    <g fill="none" stroke="#777a92" strokeWidth="1">
      <path d="M5 27H68V54H5zM25 27V54M44 27V54M5 31H68" />
      <path d="M9 35h13M9 38h13M9 41h13M9 44h13M9 47h9M28 35h13M28 38h13M28 41h13M28 44h13M28 47h13M28 50h9M48 35h17M48 38h17M48 41h17" stroke="#4b4d63" />
    </g>
    <path d="M11 29h9M30 29h8M50 29h12" stroke="#d94b56" strokeWidth="1.300" />
    <path d="M1 63.500H71" stroke="#3b4ba0" strokeWidth="2" />
  </svg>
);

const Trash = () => (
  <svg width="60" height="78" viewBox="0 0 60 78">
    <defs>
      <linearGradient id="bin" x1="0" x2="1" y1="0" y2="0">
        <stop offset="0" stopColor="#55595b" />
        <stop offset=".4" stopColor="#8b9092" />
        <stop offset="1" stopColor="#505456" />
      </linearGradient>
    </defs>
    <path d="M1 10Q30 20 59 10L52 70Q50 77 30 77T8 70z" fill="url(#bin)" />
    <path d="M2 9L12 2 20 0 28 5 38 0 48 4 58 9Q54 16 30 18T2 9z" fill="#e6e6e6" />
    <path d="M12 14l8-8 10 6-6 6zM34 4l8 4 6 8-10 1z" fill="#bfc2c4" />
    <path d="M18 10l4 5M38 6l5 6" stroke="#3a5a74" strokeWidth="2" />
    <path d="M24 12l3 3M46 9l4 2" stroke="#c86a4a" strokeWidth="2" />
  </svg>
);

/* ---------- Status icons ---------- */

const DisplayStatus = () => (
  <svg width="38" height="32" viewBox="0 0 38 32">
    <path d="M5 0H32L37 25H3z" fill="#f6f6f6" />
    <path d="M18 2L32 22" stroke="#77757a" strokeWidth="2.500" />
    <path d="M17 25h6l2 6H14z" fill="#f6f6f6" />
    <path d="M0 13Q6 10 11 12T21 11V19Q16 21 11 20T0 21z" fill="#3f74c4" />
    <path d="M0 21Q6 19 11 20T21 19V27Q16 29 11 28T0 29z" fill="#ecd04a" />
  </svg>
);

const SendStatus = () => (
  <svg width="38" height="38" viewBox="0 0 38 38">
    <path d="M2 12L26 19 15 35z" fill="none" stroke="#f6f6f6" strokeWidth="3" strokeLinejoin="round" />
    <path d="M2 12L17 16 15 35z" fill="#f6f6f6" />
    <circle cx="26" cy="11" r="11" fill="#f6f6f6" stroke="#77757a" strokeWidth="1.500" />
    <path d="M23 8l6 6M29 8l-6 6" stroke="#66646a" strokeWidth="2.500" />
  </svg>
);

const BluetoothStatus = () => (
  <svg width="17" height="27" viewBox="0 0 17 27" fill="none" stroke="#f6f6f6" strokeWidth="2.400">
    <path d="M1.500 7.500L15 19 8.500 25V2L15 8 1.500 19.500" />
  </svg>
);

const MuteStatus = () => (
  <svg width="40" height="30" viewBox="0 0 40 30" fill="none">
    <path d="M1 10H8L17 3V27L8 20H1z" fill="#a9a8ac" />
    <path d="M22 10q4 5 0 10M27 6q7 9 0 18M32 2q10 13 0 26" stroke="#a3a2a6" strokeWidth="2.600" />
    <path d="M2 0L38 29" stroke="#e4e4e5" strokeWidth="2.200" />
  </svg>
);

const BatteryStatus = () => (
  <svg width="52" height="26" viewBox="0 0 52 26">
    <rect x="1.200" y="1.200" width="44" height="23" rx="7" fill="none" stroke="#b5b4b8" strokeWidth="2.200" />
    <rect x="4.500" y="4.500" width="31" height="16.500" rx="4" fill="#f6f6f6" />
    <path d="M48 8.500q4 4.500 0 9z" fill="#b5b4b8" />
  </svg>
);

const WifiStatus = () => (
  <svg width="34" height="25" viewBox="0 0 34 25" fill="none" stroke="#f6f6f6" strokeWidth="4.200">
    <path d="M2 9Q17 -5 32 9" />
    <path d="M7.500 15Q17 6 26.500 15" />
    <path d="M17 24L12 19Q17 14.500 22 19z" fill="#f6f6f6" stroke="none" />
  </svg>
);

const ControlStatus = () => (
  <svg width="28" height="27" viewBox="0 0 28 27">
    <rect x="1.200" y="1.200" width="25.600" height="10" rx="5" fill="none" stroke="#f6f6f6" strokeWidth="2.200" />
    <circle cx="6.500" cy="6.200" r="3.400" fill="#f6f6f6" />
    <rect x="0" y="15" width="28" height="12" rx="6" fill="#f6f6f6" />
    <circle cx="21.500" cy="21" r="3.600" fill="#77757a" />
  </svg>
);

const SiriStatus = () => (
  <svg width="28" height="28" viewBox="0 0 28 28">
    <circle cx="14" cy="14" r="14" fill="#2b3560" />
    <ellipse cx="7" cy="13" rx="6.500" ry="9.500" fill="#d0436f" opacity=".85" />
    <ellipse cx="17" cy="7" rx="9" ry="6" fill="#2f9d85" opacity=".85" />
    <ellipse cx="16" cy="20" rx="9" ry="6.500" fill="#3d74d8" opacity=".85" />
    <path d="M14 5Q15 12 22 14 15 16 14 22 12 16 8 14 13 12 14 5z" fill="#fff" />
  </svg>
);

/* ---------- Data ---------- */

const MENU = [
  ["File", 84.5], ["Edit", 88], ["View", 99.5], ["History", 128], ["Bookmarks", 176],
  ["Profiles", 132], ["Tab", 84], ["Window", 137], ["Help", 60],
];

const STATUS = [
  [DisplayStatus, 77], [SendStatus, 78], [BluetoothStatus, 60], [MuteStatus, 70], [BatteryStatus, 87],
  [WifiStatus, 72], [() => <Magnifier size={25} c="#f6f6f6" s={3} />, 63], [ControlStatus, 62], [SiriStatus, 59],
];

const TABLES = [
  { name: "date_and_time", color: "#4b8fd7", x: 873, y: 591, fields: [["date", "date"], ["time", "time"], ["workout", "int", true]] },
  { name: "contains", color: "#6672c5", x: 1577, y: 1039, fields: [["workout_id", "int", true], ["exercise_id", "int", true]] },
  { name: "workout", color: "#8c66da", x: 905, y: 991, fields: [["id", "int", true], ["name", "varchar"], ["muscle_group", "varchar"]] },
  { name: "exercise", color: "#e77699", x: 2249, y: 1023, fields: [["id", "varchar", true], ["name", "varchar"], ["descriptrion", "varchar"], ["sets", "int"], ["reps", "int"]] },
];

const DOCK_MAIN = [
  [Finder, 1, 1], [Siri], [Launchpad], [Safari], [Mail, 1, 1, "4"], [Contacts], [Notes, 1, 1], [Reminders], [Maps],
  [Photos], [Messages, 1, 0, "4"], [FaceTime], [Pages], [Numbers], [Keynote], [Music], [Podcasts], [AppleTv],
  [AppStore, 1], [Settings], [Discord], [Question], [FindMy],
];
const DOCK_OPEN = [[Calendar, 1], [WhatsApp, 1], [Epic, 1], [ChromeIcon, 1], [Delta, 1]];
const DOCK_END = [[DocStack], [Trash]];

const IconBox = styled.div`
  height: 68px;
  display: flex;
  align-items: center;
`;

const Slots = ({ items }) =>
  items.map(([Icon, run, warm, badge], i) => (
    <DockSlot key={i} $running={run} $warm={warm}>
      <IconBox>
        <Icon />
      </IconBox>
      {badge && <Badge>{badge}</Badge>}
    </DockSlot>
  ));

export default function App() {
  return (
    <Desktop>
      <Global />
      <MenuBar>
        <MenuGroup>
          <StatusIcon $w={68.5}>
            <FaApple size={32} color="#f2f2f2" />
          </StatusIcon>
          <MenuItem $w={141} $bold>Chrome</MenuItem>
          {MENU.map(([t, w]) => (
            <MenuItem key={t} $w={w} $ls={-0.35}>{t}</MenuItem>
          ))}
        </MenuGroup>
        <MenuGroup>
          {STATUS.map(([Icon, w], i) => (
            <StatusIcon key={i} $w={w}><Icon /></StatusIcon>
          ))}
          <MenuItem $w={154}>Tue 13 Aug</MenuItem>
          <MenuItem $w={117}>12:46 PM</MenuItem>
        </MenuGroup>
      </MenuBar>

      <WindowBack>
        <BrowserWindow>
          <TabStrip>
            <Lights>
              <Light $c="#ec6a5e" />
              <Light $c="#f4bf4f" />
              <Light $c="#61c554" />
            </Lights>
            <Tab>
              <Favicon $gap={16}><TeamsIcon /></Favicon>
              <TabTitle $w={334} $ls={-0.45} $after={26}>Teams and Channels | 200Acc</TabTitle>
              <Cross />
            </Tab>
            <TabSeparator />
            <Tab>
              <Favicon $gap={15}><FaGithub size={32} color="#1b1819" /></Favicon>
              <TabTitle $w={336} $ls={-0.3} $after={25}>Database.md — The-Bat-Cave</TabTitle>
              <Cross />
            </Tab>
            <Tab $active>
              <Favicon $gap={15} $bg="#202020"><Mark w={18} h={19} /></Favicon>
              <TabTitle $w={334} $ls={-0.25} $after={27}>200 DTD Brother's workout tr</TabTitle>
              <Cross />
            </Tab>
            <NewTab>
              <svg width="20" height="20" viewBox="0 0 20 20" stroke="#fff" strokeWidth="2.800">
                <path d="M10 0V20M0 10H20" />
              </svg>
            </NewTab>
            <TabSearch><Chevron w={17} h={11} s={3.2} c="#fff" /></TabSearch>
          </TabStrip>

          <Toolbar>
            <NavButtons>
              <svg width="24" height="24" viewBox="0 0 24 24" fill="none" stroke="#fff" strokeWidth="2.800">
                <path d="M24 12H2M13 1L2 12l11 11" />
              </svg>
              <svg width="24" height="24" viewBox="0 0 24 24" fill="none" stroke="#7f7f7f" strokeWidth="2.800">
                <path d="M0 12H22M11 1l11 11-11 11" />
              </svg>
              <svg width="24" height="24" viewBox="0 0 24 24" fill="none" stroke="#fff" strokeWidth="3">
                <path d="M22.500 14A10.500 10.500 0 1 1 20.500 5.500M23 0V9H14" />
              </svg>
            </NavButtons>
            <AddressBar>
              <SiteInfo>
                <svg width="26" height="24" viewBox="0 0 26 24" fill="none" stroke="#fff" strokeWidth="2.800">
                  <circle cx="6" cy="5" r="3.800" />
                  <path d="M13 5H24M2 19H12" />
                  <circle cx="20" cy="19" r="3.800" />
                </svg>
              </SiteInfo>
              <Url>
                <b>drawsql.app</b>/teams/coopers-team-2/diagrams/200-dtd-brother-s-workout-tracker
              </Url>
              <svg width="32" height="30" viewBox="0 0 32 30" fill="none" stroke="#c3c4c6" strokeWidth="2.800">
                <path d="M16 3L19.700 11.500 29 12.300 22 18.400 24.100 27.500 16 22.700 7.900 27.500 10 18.400 3 12.300 12.300 11.500z" />
              </svg>
            </AddressBar>
            <svg width="32" height="32" viewBox="0 0 32 32" fill="none" stroke="#fff" strokeWidth="3.400">
              <path d="M16 0V20M8 13l8 8 8-8M2 22V28Q2 30.300 4.500 30.300H27.500Q30 30.300 30 28V22" />
            </svg>
            <ProfileDot>C</ProfileDot>
            <VDots r={3.6} gap={11} c="#fff" />
          </Toolbar>

          <AppHeader>
            <Brand>
              <Mark w={49} h={52} />
              <Wordmark width="193" height="44" viewBox="0 0 193 44">
                <text x="0" y="36" fontSize="41" fontWeight="700" stroke="#fff" strokeWidth="0.600" textLength="107" lengthAdjust="spacingAndGlyphs">draw</text>
                <text x="110" y="36" fontSize="42" stroke="#6167e6" strokeWidth="1.100" textLength="83" lengthAdjust="spacingAndGlyphs">SQL</text>
              </Wordmark>
            </Brand>
            <HeaderLink $w={125}>File</HeaderLink>
            <HeaderLink $w={619}>Share</HeaderLink>
            <Breadcrumb>
              <Crumb $muted $w={211} $ls={-0.15}>Diagrams &gt;</Crumb>
              <Crumb $ls={0}>200 DTD Brother's workout tracker</Crumb>
            </Breadcrumb>
            <svg width="56" height="44" viewBox="0 0 56 44" fill="none" stroke="#aab4f9" strokeWidth="3.600" strokeLinejoin="round">
              <path d="M13 42C6 42 2 37 2 31.500 2 26 5 22 9 20.500 8 11 14 2 24 2 32 2 38 7 39.500 13 45 12.500 48.500 17 48 22 52 24 54 28 54 32 54 38 50 42 44 42z" />
              <path d="M18.500 27L25.500 33.500 37 18" strokeLinecap="round" />
            </svg>
            <SaveGroup>
              <SaveButton><Ring />Save</SaveButton>
              <SaveMenu><Chevron w={22} h={15} s={3.8} c="#fff" /></SaveMenu>
            </SaveGroup>
            <Avatar>C</Avatar>
          </AppHeader>

          <Workspace>
            <Sidebar>
              <SidebarHead>
                <svg width="18" height="26" viewBox="0 0 18 26" fill="none" stroke="#3a4458" strokeWidth="3" strokeLinecap="round">
                  <path d="M1.500 1.500l7.500 7.500L16.500 1.500M1.500 24.500l7.500-7.500 7.500 7.500" />
                </svg>
                <SidebarTitle>Tables</SidebarTitle>
                <Magnifier size={30} c="#3a4458" s={2.4} />
                <NewTable><span>+</span><span>New table</span></NewTable>
              </SidebarHead>
              {TABLES.map((t) => (
                <TableRow key={t.name}>
                  <Stripe $c={t.color} />
                  <RowBody>
                    <RowChevron />
                    <RowName>{t.name}</RowName>
                    <VDots r={3.8} gap={11} c="#69758c" />
                  </RowBody>
                </TableRow>
              ))}
            </Sidebar>

            <Canvas>
              <Links width="2180" height="1342" viewBox="700 334 2180 1342">
                <path d="M873 799H847Q826.500 799 826.500 819V1131Q826.500 1151 847 1151H905M873 788.500L845 799L873 809.500" />
                <path d="M1339 1103H1437Q1458 1103 1458 1124V1130Q1458 1151 1479 1151H1577M1577 1140.500L1549 1151L1577 1161.500" />
                <path d="M2249 1135H2151Q2130 1135 2130 1156V1178Q2130 1199 2109 1199H2011M2011 1188.500L2040 1199L2011 1209.500" />
              </Links>
              {TABLES.map((t) => (
                <Entity key={t.name} $x={t.x - 700} $y={t.y - 334} $c={t.color}>
                  <EntityTitle>{t.name}</EntityTitle>
                  {t.fields.map(([n, type, key]) => (
                    <Field key={n}>
                      <KeySlot>{key && <KeyIcon />}</KeySlot>
                      <FieldName $key={key}>{n}</FieldName>
                      <FieldType>{type}</FieldType>
                    </Field>
                  ))}
                </Entity>
              ))}
              <CollapseTab>
                <svg width="13" height="22" viewBox="0 0 13 22" fill="none" stroke="#475166" strokeWidth="4">
                  <path d="M11.500 1.500L3 11l8.500 9.500" />
                </svg>
              </CollapseTab>
              <Controls>
                <Tool>
                  <svg width="34" height="34" viewBox="0 0 34 34" fill="#69758c">
                    <path d="M1.900 1.900H32.100V32.100H1.900z" fill="none" stroke="#69758c" strokeWidth="3.800" />
                    <path d="M15 7.500h4v4h-4zM15 15h4v4h-4zM15 22.500h4v4h-4zM7.500 15h4v4h-4zM22.500 15h4v4h-4z" />
                  </svg>
                </Tool>
                <Tool><HandIcon /></Tool>
                <Tool>
                  <svg width="36" height="36" viewBox="0 0 36 36" fill="none" stroke="#69758c" strokeWidth="3.200">
                    {[[1.6, 1.6], [21.4, 1.6], [1.6, 21.4], [21.4, 21.4]].map(([x, y]) => (
                      <rect key={`${x}-${y}`} x={x} y={y} width="13" height="13" rx="4" />
                    ))}
                  </svg>
                </Tool>
                <ZoomGroup>
                  <ZoomCell $line>
                    <svg width="28" height="28" fill="#69758c"><rect y="12" width="28" height="6.500" rx="1.500" /></svg>
                  </ZoomCell>
                  <ZoomCell $line>80%</ZoomCell>
                  <ZoomCell>
                    <svg width="28" height="30" fill="#69758c"><rect y="12.500" width="28" height="6.500" rx="1.500" /><rect x="10.750" y="2" width="6.500" height="28" rx="1.500" /></svg>
                  </ZoomCell>
                </ZoomGroup>
                <Tool>
                  <svg width="36" height="36" viewBox="0 0 36 36" fill="none" stroke="#69758c" strokeWidth="3.200">
                    <rect x="1.600" y="1.600" width="32.800" height="32.800" rx="4" />
                    <path d="M14.500 12L9.500 18l5 6M21.500 12l5 6-5 6" />
                  </svg>
                  <Notice />
                </Tool>
              </Controls>
            </Canvas>
          </Workspace>
        </BrowserWindow>
      </WindowBack>

      <DockArea>
        <Dock>
          <Slots items={DOCK_MAIN} />
          <DockDivider />
          <Slots items={DOCK_OPEN} />
          <DockDivider />
          <Slots items={DOCK_END} />
        </Dock>
      </DockArea>
    </Desktop>
  );
}
